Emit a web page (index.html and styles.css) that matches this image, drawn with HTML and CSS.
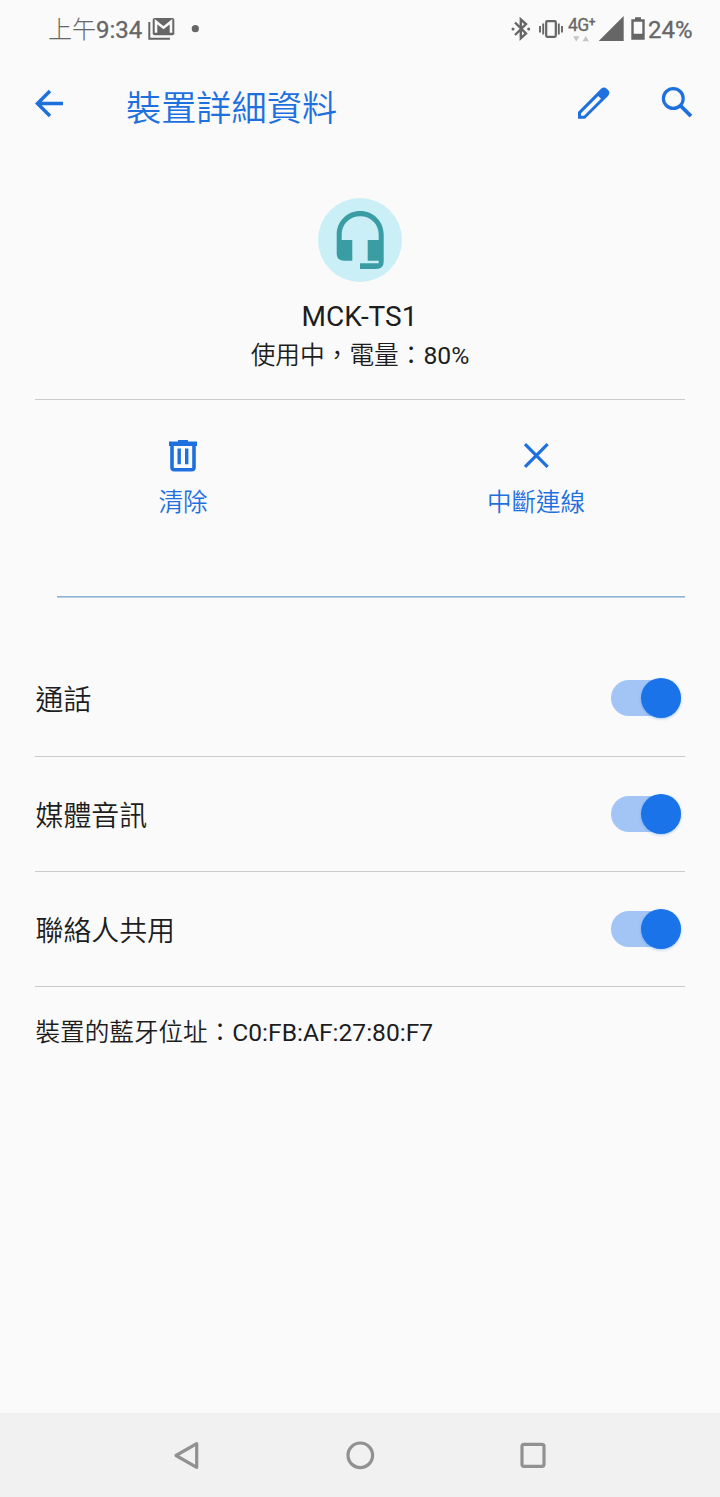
FILE: index.html
```html
<!DOCTYPE html>
<html lang="zh-Hant">
<head>
<meta charset="utf-8">
<title>裝置詳細資料</title>
<link rel="stylesheet" href="styles.css">
</head>
<body>
<div class="screen">
  <div class="status">
    <span class="clock"><span class="ampm">上午</span>9:34</span>
    <svg class="notices" width="56" height="28" viewBox="146 15 56 28">
      <path d="M149.300 22V38.700H170" fill="none" stroke="#666" stroke-width="2"/>
      <rect x="152.700" y="18" width="21.600" height="17.300" rx="2" fill="#666"/>
      <path d="M156 32.700V21.700L163.500 27.700L171 21.700V32.700" fill="none" stroke="#fafafa" stroke-width="2.600"/>
      <circle cx="195.300" cy="28.700" r="3.600" fill="#666"/>
    </svg>
    <svg class="bluetooth" width="56" height="28" viewBox="510 15 56 28">
      <path d="M515 22.500L526 33.500L520.800 38.300V19.500L526 24L515 35" fill="none" stroke="#666" stroke-width="2.400"/>
      <circle cx="513" cy="29" r="1.500" fill="#666"/><circle cx="528.700" cy="29" r="1.500" fill="#666"/>
      <rect x="546.200" y="21.200" width="9.600" height="15.600" rx="1" fill="none" stroke="#666" stroke-width="2.200"/>
      <path d="M540 26V32.500M543.200 23.500V34.500M558.800 23.500V34.500M562 26V32.500" stroke="#666" stroke-width="1.900"/>
    </svg>
    <span class="network"><span class="gen">4G<span class="plus">+</span></span>
      <svg class="traffic" width="16" height="6" viewBox="573 36 16 6"><path d="M573 36.300H579.500L576.200 41.500ZM582.500 41.300H589L585.800 36Z" fill="#c6c6c6"/></svg>
    </span>
    <svg class="signal" width="48" height="28" viewBox="598 15 48 28">
      <path d="M623.700 16V41H598.700Z" fill="#666"/>
      <path d="M635 17.300H641V19.300H644.700V39.800H631.300V19.300H635ZM633.700 21.800V33.700H642.300V21.800Z" fill="#666" fill-rule="evenodd"/>
    </svg>
    <span class="percent">24%</span>
  </div>
  <header class="bar">
    <svg class="back" width="32" height="32" viewBox="33 88 32 32"><path d="M63 103.500H37.500M50 91L37.500 103.500L50 116" fill="none" stroke="#1f70df" stroke-width="3.500"/></svg>
    <h1 class="title">裝置詳細資料</h1>
    <svg class="tools" width="118" height="36" viewBox="576 85 118 36">
      <path d="M578 118.700V112L600 89.800Q603.500 85.800 607 89L608 90Q611 93 607.500 96.500L585 118.700ZM581 115.700H584L601 98.700L598.300 96L581 113.200Z" fill="#1f70df" fill-rule="evenodd"/>
      <circle cx="673.300" cy="98.500" r="9.900" fill="none" stroke="#1f70df" stroke-width="3.200"/>
      <path d="M680.300 105.500L691 116.200" stroke="#1f70df" stroke-width="3.800"/>
    </svg>
  </header>
  <main class="content">
    <section class="device">
      <svg class="avatar" width="84" height="84" viewBox="318 198 84 84">
        <circle cx="360" cy="240" r="42" fill="#caeff7"/>
        <path d="M360.200 211C347 211 336.700 221.500 336.700 234.500V253.500Q336.700 260.700 344 260.700H352.300V240H341.700V234.500C341.700 224 350 216.300 360.200 216.300S378.700 224 378.700 234.500V240H367.700V260.700H378.700V263.300H360V269H376Q383.700 269 383.700 261.500V234.500C383.700 221.500 373.500 211 360.200 211Z" fill="#3a9da4"/>
      </svg>
      <div class="name">MCK-TS1</div>
      <div class="state"><span class="han">使用中，電量：</span>80%</div>
    </section>
    <section class="actions">
      <div class="action">
        <svg width="36" height="36" viewBox="165 438 36 36">
          <path d="M178 440H188V441.500H197V446H169V441.500H178Z" fill="#1f70df"/>
          <path d="M172 445V467.500Q172 469.800 174.300 469.800H191.700Q194 469.800 194 467.500V445" fill="none" stroke="#1f70df" stroke-width="3.600"/>
          <path d="M179.200 448.500V464.300M186.700 448.500V464.300" stroke="#1f70df" stroke-width="3.400"/>
        </svg>
        <span class="label">清除</span>
      </div>
      <div class="action disconnect">
        <svg width="36" height="36" viewBox="518 438 36 36"><path d="M525 444.200L547.600 466.800M547.600 444.200L525 466.800" stroke="#1f70df" stroke-width="3.200"/></svg>
        <span class="label">中斷連線</span>
      </div>
    </section>
    <div class="divider"></div>
    <section class="settings">
      <div class="row"><span>通話</span><span class="switch"><i class="thumb"></i></span></div>
      <div class="row"><span>媒體音訊</span><span class="switch"><i class="thumb"></i></span></div>
      <div class="row"><span>聯絡人共用</span><span class="switch"><i class="thumb"></i></span></div>
    </section>
    <p class="address"><span class="han">裝置的藍牙位址：</span>C0:FB:AF:27:80:F7</p>
  </main>
  <nav class="nav">
    <svg width="32" height="32" viewBox="171 1439 32 32"><path d="M196.700 1443.700V1467.300L176 1455.500Z" fill="none" stroke="#919191" stroke-width="3.200" stroke-linejoin="round"/></svg>
    <svg width="32" height="32" viewBox="344 1439 32 32"><circle cx="360.300" cy="1455.300" r="12.300" fill="none" stroke="#919191" stroke-width="3.200"/></svg>
    <svg width="32" height="32" viewBox="517 1439 32 32"><rect x="522" y="1444.300" width="22" height="22" rx="2" fill="none" stroke="#919191" stroke-width="3.200"/></svg>
  </nav>
</div>
</body>
</html>
```
FILE: styles.css
```css
* { box-sizing: border-box; }
body {
  margin: 0;
  background: #fafafa;
  color: #1d1d1d;
  font-family: Roboto, "Noto Sans CJK TC", sans-serif;
}
svg { display: block; flex: none; }
.han, .title, .label, .row { font-weight: 350; }
.screen { display: flex; flex-direction: column; width: 720px; height: 1497px; }
.status {
  display: flex;
  height: 60px;
  padding: 15px 0 0 48px;
  color: #666;
  font-size: 24px;
  line-height: 30px;
  white-space: nowrap;
}
.clock { width: 98px; -webkit-text-stroke: 0.300px #666; }
.ampm { font-weight: 300; -webkit-text-stroke: 0; }
.bluetooth { margin-left: 308px; }
.network { width: 30px; margin-left: 2px; }
.gen { display: block; height: 21px; font-size: 17.500px; line-height: 20px; letter-spacing: -0.500px; -webkit-text-stroke: 0.300px #666; }
.plus { font-size: 12px; font-weight: 500; vertical-align: 5px; line-height: 1px; }
.traffic { margin-left: 5px; }
.percent { margin-left: 2px; -webkit-text-stroke: 0.300px #666; }
.bar { display: flex; height: 100px; padding: 25px 26px 0 33px; color: #1f70df; }
.back { margin-top: 3px; }
.title {
  flex: 1;
  margin: 2px 0 0 61px;
  font-size: 35.200px;
  line-height: 44px;
}
.content { flex: 1; padding: 0 35px; }
.device {
  height: 240px;
  padding-top: 38px;
  border-bottom: 1px solid #cacaca;
  text-align: center;
}
.avatar { margin: 0 auto; }
.name { margin: 15px 1px 0 0; font-size: 28px; line-height: 40px; }
.state { font-size: 24.700px; line-height: 38px; }
.actions { display: flex; height: 196px; padding: 38px 0 0; margin: 0 -29px; }
.action { display: flex; flex: 1; flex-direction: column; align-items: center; color: #1f70df; }
.disconnect { padding-right: 2px; }
.label { margin-top: 10px; padding-left: 1px; font-size: 24.500px; line-height: 38px; }
.divider { height: 2px; margin-left: 22px; background: linear-gradient(#8db4d8 50%, #b8cedd 50%); }
.settings { padding-top: 43px; }
.row {
  display: flex;
  align-items: center;
  justify-content: space-between;
  height: 115px;
  padding: 0 4px 1px 0.500px;
  border-bottom: 1px solid #cacaca;
  font-size: 27.900px;
}
.row:first-child { height: 116px; }
.row:last-child { padding-bottom: 0; }
.switch { display: flex; justify-content: flex-end; align-items: center; width: 70px; height: 36px; border-radius: 18px; background: #a3c5f5; }
.thumb { flex: none; width: 40px; height: 40px; border-radius: 50%; background: #1a73e8; box-shadow: 0 1px 3px #1a73e855; }
.address { margin: 27px 0 0 0.500px; font-size: 24.600px; line-height: 38px; }
.nav { display: flex; justify-content: center; align-items: center; gap: 141px; height: 84px; background: #f1f1f1; }
```
